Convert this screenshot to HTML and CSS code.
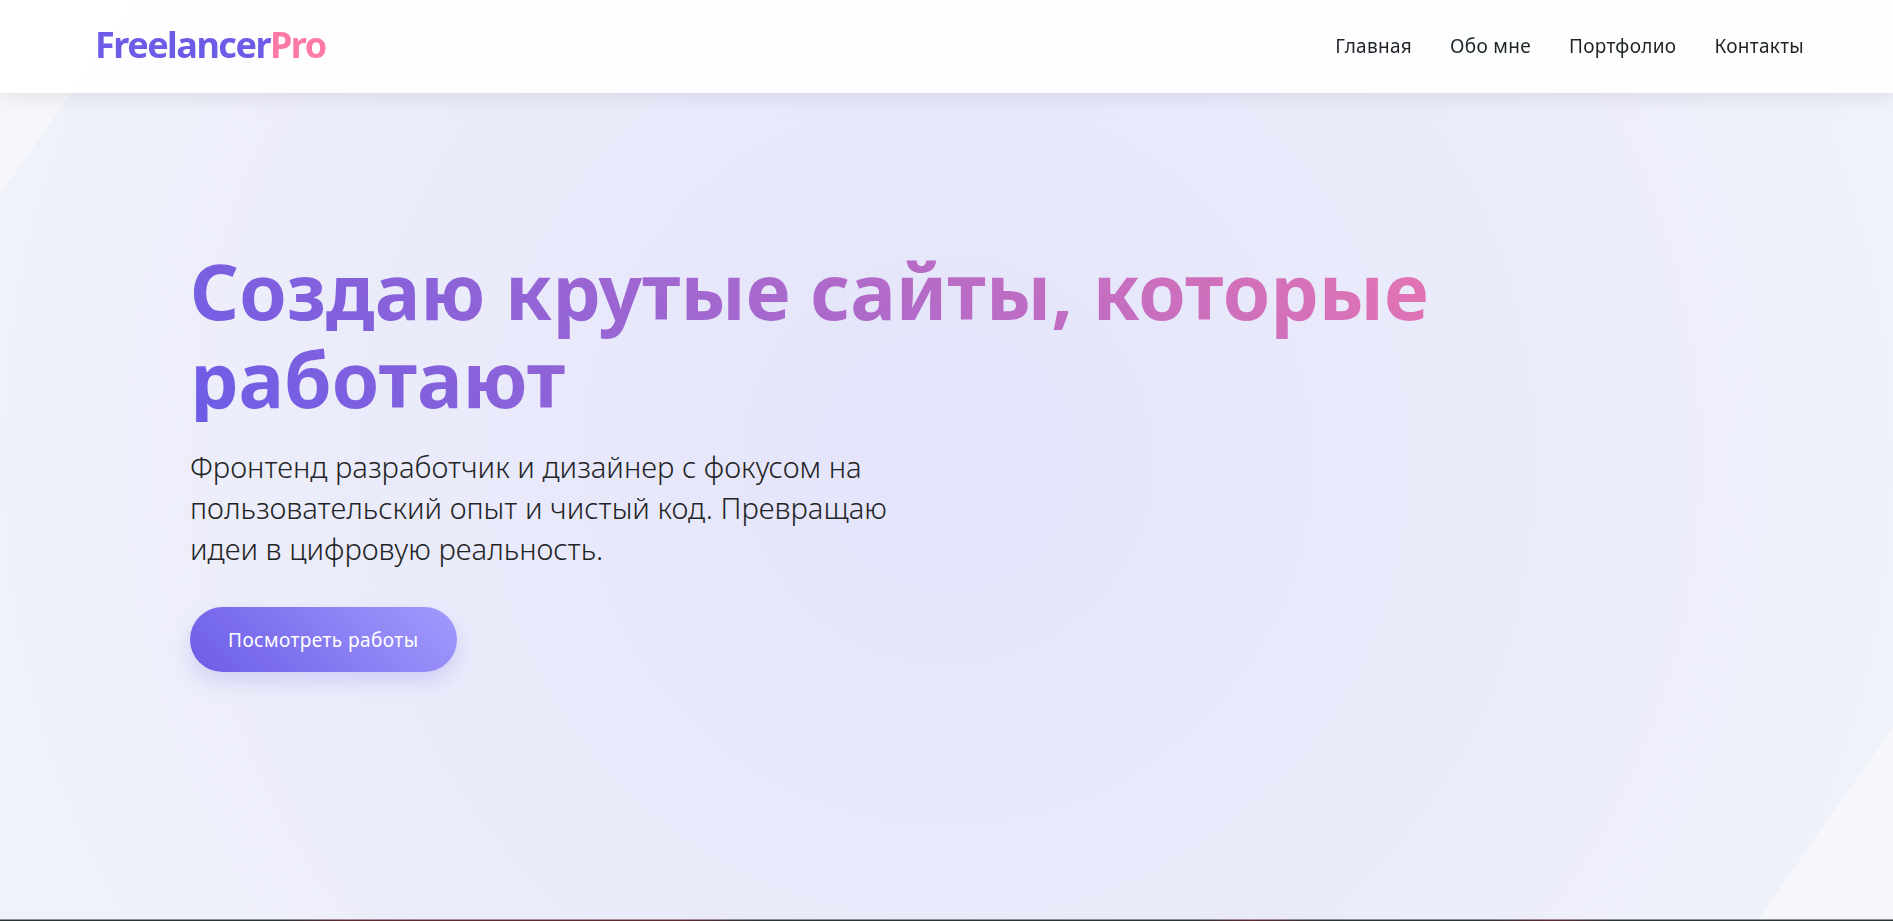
FILE: index.html
```html
<!DOCTYPE html>
<html lang="ru">
<head>
<meta charset="utf-8">
<title>FreelancerPro</title>
<link rel="stylesheet" href="styles.css">
</head>
<body>
<header class="site-header">
  <a class="logo" href="#">Freelancer<span class="logo-accent">Pro</span></a>
  <nav class="nav">
    <a href="#">Главная</a>
    <a href="#">Обо мне</a>
    <a href="#">Портфолио</a>
    <a href="#">Контакты</a>
  </nav>
</header>
<main>
  <section class="hero">
    <div class="hero-glow"></div>
    <div class="hero-content">
      <h1 class="hero-title">Создаю крутые сайты, которые работают</h1>
      <p class="hero-text">Фронтенд разработчик и дизайнер с фокусом на пользовательский опыт и чистый код. Превращаю идеи в цифровую реальность.</p>
      <a class="btn" href="#">Посмотреть работы</a>
    </div>
  </section>
  <section class="next-section"></section>
</main>
</body>
</html>
```
FILE: styles.css
```css
* { box-sizing: border-box; margin: 0; padding: 0; }
html, body { height: 100%; overflow: hidden; }
body {
  font-family: "Noto Sans", "Open Sans", "Liberation Sans", sans-serif;
  background: #f5f7fa;
  color: #2d3436;
}
a { text-decoration: none; color: inherit; }
.site-header {
  position: fixed;
  top: 0;
  left: 0;
  right: 0;
  z-index: 2;
  height: 93px;
  display: flex;
  align-items: center;
  justify-content: space-between;
  padding: 0 89px 3px 95px;
  background: rgba(255, 255, 255, 0.9);
  box-shadow: 0 2px 20px rgba(0, 0, 0, 0.1);
}
.logo { font-size: 36px; line-height: 46px; font-weight: 700; letter-spacing: -1.5px; color: #6c5ce7; }
.logo-accent { color: #fd79a8; }
.nav { display: flex; gap: 38px; font-size: 19px; letter-spacing: 0.3px; color: #1f2527; padding-top: 2px; }
.hero {
  position: relative;
  height: 919px;
  overflow: hidden;
  padding: 246px 190px 0;
}
.hero-glow {
  position: absolute;
  left: 18.5px;
  top: -470px;
  width: 1856px;
  height: 1860px;
  transform: rotate(35deg);
  background: radial-gradient(circle 1000px at center, rgba(162, 155, 254, 0.21), rgba(162, 155, 254, 0.06));
}
.hero-content { position: relative; }
.hero-title {
  font-size: 76.4px;
  line-height: 88px;
  font-weight: 700;
  background: linear-gradient(45deg, #6c5ce7, #fd79a8);
  -webkit-background-clip: text;
  background-clip: text;
  color: transparent;
}
.hero-text {
  max-width: 720px;
  margin-top: 25px;
  font-size: 29.25px;
  line-height: 41px;
  font-weight: 300;
  color: #1f2527;
}
.btn {
  display: inline-block;
  margin-top: 37px;
  padding: 21px 38px 19px;
  border-radius: 50px;
  font-size: 19px;
  line-height: 25px;
  letter-spacing: 0.45px;
  color: #fff;
  background: linear-gradient(45deg, #6c5ce7, #a29bfe);
  box-shadow: 0 10px 20px rgba(108, 92, 231, 0.2);
}
.next-section {
  height: 2px;
  background:
    linear-gradient(to bottom, rgba(240, 240, 250, 0.5) 50%, transparent 50%),
    linear-gradient(90deg, #2d3436 15%, #5c2a33 18%, #5c2a33 36%, #2d3436 40%, #2d3436 63%, #5c2a33 66%, #2d3436 70%, #2d3436 78%, #5c2a33 82%, #2d3436 85%);
}
```
